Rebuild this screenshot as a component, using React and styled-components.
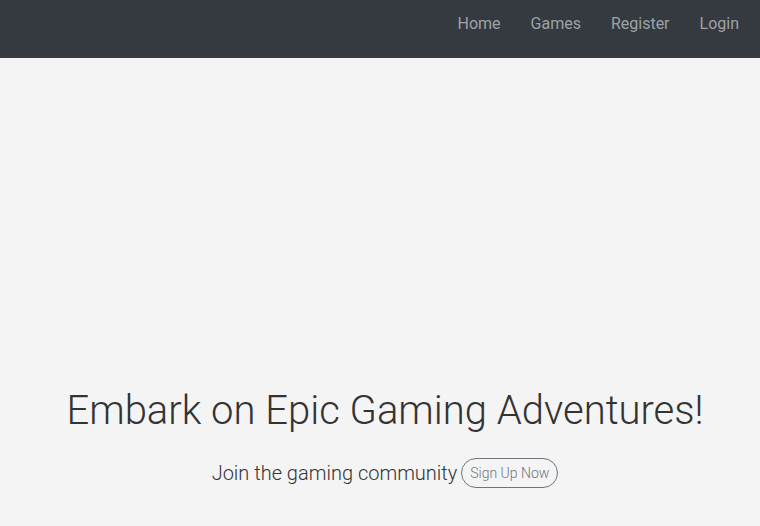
import styled, { createGlobalStyle } from 'styled-components';

const GlobalStyle = createGlobalStyle`
  body {
    margin: 0;
    background-color: #f4f4f4;
    font-family: Roboto, "Liberation Sans", sans-serif;
    color: #333;
  }
`;

const Navbar = styled.nav`
  height: 58px;
  background-color: #343a40;
  display: flex;
  align-items: center;
  justify-content: flex-end;
  padding: 0 6px 0 0;
  box-sizing: border-box;
`;

const NavList = styled.ul`
  display: flex;
  list-style: none;
  margin: 0;
  padding: 0 0 12px;
`;

const NavLink = styled.a`
  display: block;
  padding: 0 15px;
  font-size: 16px;
  color: #9ea2a6;
  text-decoration: none;
  cursor: pointer;

  &:hover {
    color: #fff;
  }
`;

const Hero = styled.section`
  display: flex;
  flex-direction: column;
  align-items: center;
  padding: 329px 0 0 10px;
  text-align: center;
`;

const Title = styled.h1`
  margin: 0 0 23px;
  font-size: 40px;
  font-weight: 300;
  line-height: 1.2;
  color: #333;
`;

const Lead = styled.p`
  margin: 0;
  font-size: 20px;
  font-weight: 300;
  display: flex;
  align-items: center;
  gap: 4px;
`;

const SignUpButton = styled.a`
  display: inline-block;
  padding: 5px 8px;
  font-size: 14px;
  font-weight: 300;
  color: #6c757d;
  border: 1px solid #6c757d;
  border-radius: 16px;
  line-height: 18px;
  text-decoration: none;
  cursor: pointer;
`;

export default function App() {
  return (
    <>
      <GlobalStyle />
      <Navbar>
        <NavList>
          <li><NavLink href="#home">Home</NavLink></li>
          <li><NavLink href="#games">Games</NavLink></li>
          <li><NavLink href="#register">Register</NavLink></li>
          <li><NavLink href="#login">Login</NavLink></li>
        </NavList>
      </Navbar>
      <Hero>
        <Title>Embark on Epic Gaming Adventures!</Title>
        <Lead>
          Join the gaming community
          <SignUpButton href="#register">Sign Up Now</SignUpButton>
        </Lead>
      </Hero>
    </>
  );
}
